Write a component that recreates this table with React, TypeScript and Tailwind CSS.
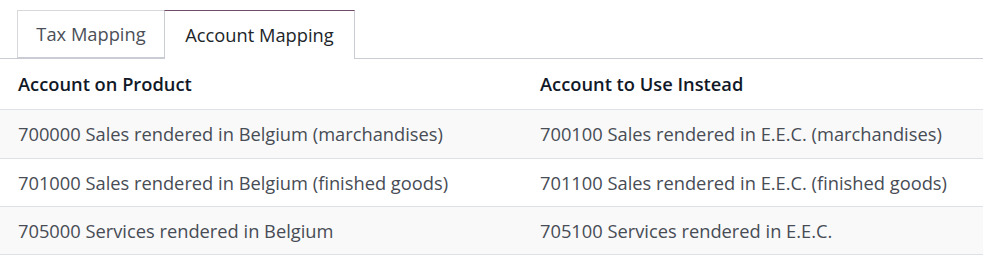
const ROWS = [
  ['700000 Sales rendered in Belgium (marchandises)', '700100 Sales rendered in E.E.C. (marchandises)'],
  ['701000 Sales rendered in Belgium (finished goods)', '701100 Sales rendered in E.E.C. (finished goods)'],
  ['705000 Services rendered in Belgium', '705100 Services rendered in E.E.C.'],
];

export default function App() {
  return (
    <div className="w-[983px] h-[262px] bg-white font-['Open_Sans',sans-serif] text-[18.3px]">
      <div className="flex pl-[17px] pt-[10px] border-b border-[#c9ccd2]">
        <div className="w-[147px] h-[48px] flex items-center justify-center border-t border-l border-[#d6d8dc] text-[#4b5058] -mb-px border-b border-b-[#c9ccd2]">
          Tax Mapping
        </div>
        <div className="w-[191px] h-[49px] flex items-center justify-center border-t border-t-[#714b67] border-x border-x-[#c9ccd2] bg-white text-[#212529] -mb-px">
          Account Mapping
        </div>
      </div>
      <div className="grid grid-cols-[522px_1fr]">
        <div className="h-[51px] flex items-center pl-[18px] font-semibold text-[#111827] border-b border-[#dee2e6]">
          Account on Product
        </div>
        <div className="h-[51px] flex items-center pl-[18px] font-semibold text-[#111827] border-b border-[#dee2e6]">
          Account to Use Instead
        </div>
        {ROWS.map(([a, b], i) => (
          <div key={i} className="contents">
            <div className={`flex items-center pl-[18px] text-[#474c55] border-b border-[#dee2e6] ${i === 0 ? 'h-[49px]' : 'h-[48px]'} ${i % 2 === 0 ? 'bg-[#f9f9f9]' : 'bg-white'}`}>
              {a}
            </div>
            <div className={`flex items-center pl-[18px] text-[#474c55] border-b border-[#dee2e6] ${i === 0 ? 'h-[49px]' : 'h-[48px]'} ${i % 2 === 0 ? 'bg-[#f9f9f9]' : 'bg-white'}`}>
              {b}
            </div>
          </div>
        ))}
      </div>
    </div>
  );
}
